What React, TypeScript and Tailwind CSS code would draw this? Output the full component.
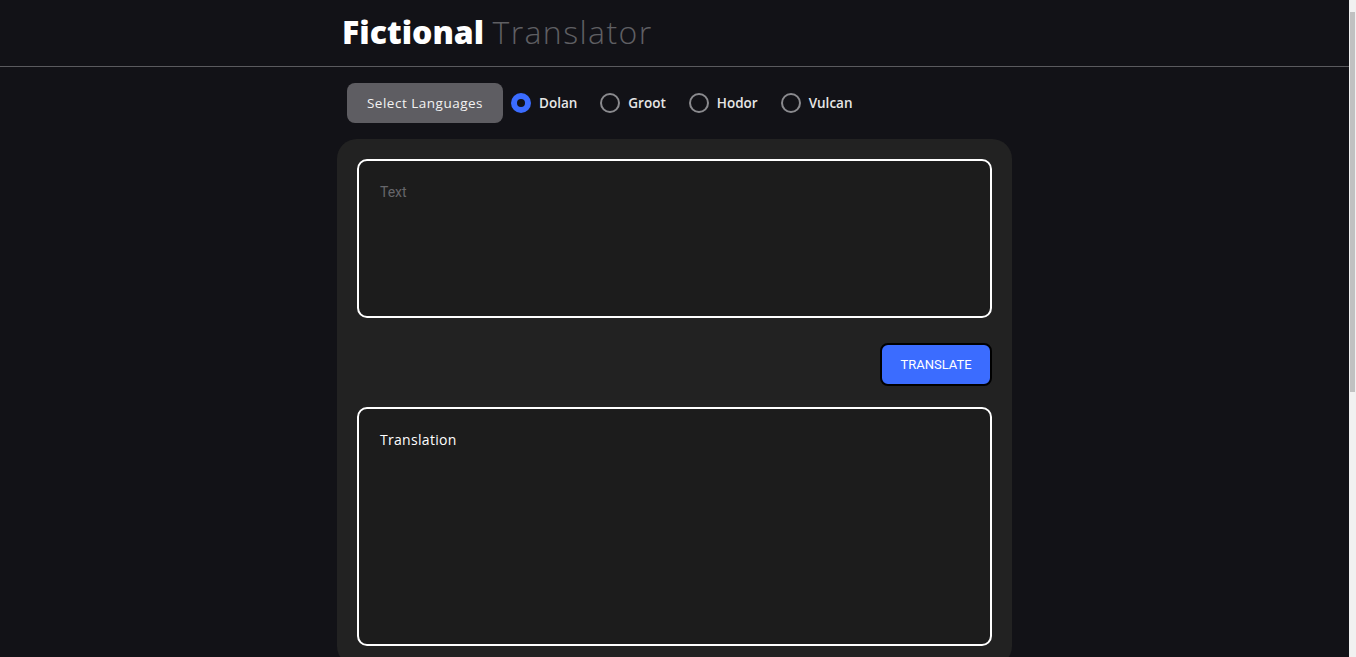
import React, { useState } from 'react';

const languages = ['Dolan', 'Groot', 'Hodor', 'Vulcan'];

const App = () => {
  const [selected, setSelected] = useState('Dolan');
  const [text, setText] = useState('');

  return (
    <div className="flex h-[657px] w-full overflow-hidden bg-[#121217]" style={{ fontFamily: '"Open Sans", "Liberation Sans", sans-serif' }}>
      <div className="flex-1 overflow-hidden">
        {/* Header */}
        <header className="h-[67px] border-b border-[#5a5a5e]">
          <div className="mx-auto w-[675px] px-[5px] pt-[10px]">
            <h1 className="text-[32px] leading-[44px]">
              <span className="font-extrabold text-white">Fictional</span>{' '}
              <span className="font-light tracking-[1.4px] text-[#5f5f63]">Translator</span>
            </h1>
          </div>
        </header>

        <main className="mx-auto w-[675px]">
          {/* Language picker */}
          <div className="flex h-[40px] items-center mt-[16px] pl-[10px]">
            <button className="h-[40px] w-[156px] rounded-lg bg-[#5e5d62] text-[13.5px] font-medium tracking-[0.5px] text-[#f2f2f2]">
              Select Languages
            </button>
            <div className="ml-[8px] flex items-center">
              {languages.map((lang) => (
                <label key={lang} className="mr-[23px] flex cursor-pointer items-center gap-[8px]" onClick={() => setSelected(lang)}>
                  {selected === lang ? (
                    <span className="flex h-[20px] w-[20px] items-center justify-center rounded-full bg-[#3b6cff]">
                      <span className="h-[8px] w-[8px] rounded-full bg-[#121217]" />
                    </span>
                  ) : (
                    <span className="h-[20px] w-[20px] rounded-full border-2 border-[#8a8a8e]" />
                  )}
                  <span className="text-[13.5px] font-semibold text-[#e6e6e6]">{lang}</span>
                </label>
              ))}
            </div>
          </div>

          {/* Card */}
          <div className="mt-[16px] rounded-[20px] bg-[#222222] p-[20px]">
            <textarea
              value={text}
              onChange={(e) => setText(e.target.value)}
              placeholder="Text"
              className="block h-[159px] w-full resize-none rounded-[10px] border-2 border-white bg-[#1c1c1c] px-[21px] py-[21px] text-[14px] text-white outline-none placeholder:text-[#66666a]"
              style={{ fontFamily: 'Roboto, "Liberation Sans", sans-serif' }}
            />
            <div className="mt-[25px] flex justify-end">
              <button
                className="h-[43px] w-[112px] rounded-lg border-2 border-black bg-[#3b6cff] text-[13px] text-white"
                style={{ fontFamily: 'Roboto, "Liberation Sans", sans-serif' }}
              >
                TRANSLATE
              </button>
            </div>
            <div className="mt-[21px] h-[239px] rounded-[10px] border-2 border-white bg-[#1c1c1c] px-[21px] py-[20px]">
              <p className="text-[14px] font-medium tracking-[0.3px] text-white">{text ? text : 'Translation'}</p>
            </div>
          </div>
        </main>
      </div>

      {/* Scrollbar */}
      <div className="flex w-[7px] flex-col bg-[#f1f1f1]">
        <div className="h-[12px]" />
        <div className="mx-auto h-[380px] w-[5px] bg-[#c1c1c1]" />
      </div>
    </div>
  );
};

export default App;
